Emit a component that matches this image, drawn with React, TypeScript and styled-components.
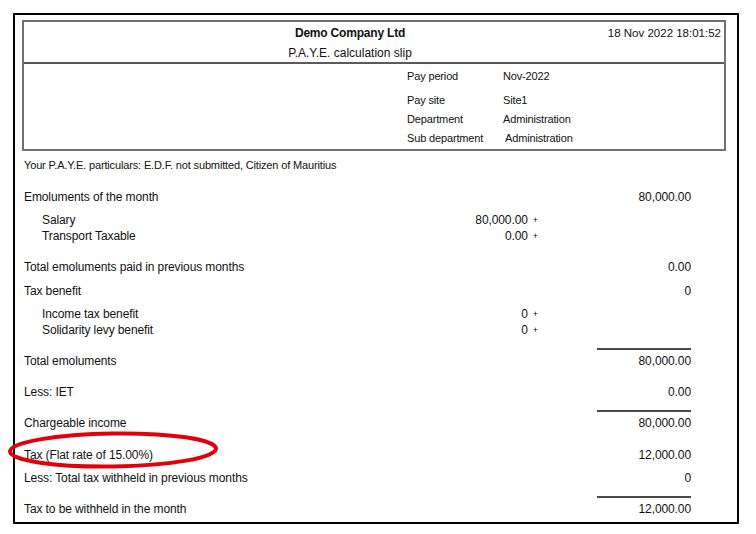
import React from "react";
import styled, { createGlobalStyle } from "styled-components";

const GlobalStyle = createGlobalStyle`
  html, body { margin: 0; padding: 0; background: #ffffff; }
  body { font-family: "Liberation Sans", Arial, sans-serif; color: #111; }
  * { box-sizing: border-box; }
`;

const Page = styled.div`
  padding: 13px 0 0 13px;
  width: 756px;
  height: 534px;
`;

const Frame = styled.div`
  width: 726px;
  height: 511px;
  border: 2px solid #000;
  padding-top: 5px;
`;

const HeaderBox = styled.div`
  margin: 0 11px 0 7px;
  border: 2px solid #707070;
`;

const TitleArea = styled.div`
  display: grid;
  grid-template-rows: 16px 16px;
  row-gap: 4px;
  padding: 3px 3px 1px 0;
  border-bottom: 2px solid #5a5a5a;
`;

const Title = styled.div`
  grid-row: 1;
  grid-column: 1;
  text-align: center;
  padding-right: 45px;
  font-weight: bold;
  font-size: 12px;
  line-height: 16px;
  letter-spacing: -0.2px;
`;

const DateText = styled.div`
  grid-row: 1;
  grid-column: 1;
  justify-self: end;
  font-size: 11.5px;
  line-height: 16px;
`;

const Subtitle = styled.div`
  grid-row: 2;
  grid-column: 1;
  text-align: center;
  padding-right: 45px;
  font-size: 12px;
  line-height: 16px;
`;

const InfoArea = styled.div`
  padding: 5px 0 4px 383px;
  display: flex;
  flex-direction: column;
`;

const InfoRow = styled.div<{ $mt: number; $shift?: number }>`
  display: grid;
  grid-template-columns: 96px auto;
  margin-top: ${(p) => p.$mt}px;
  font-size: 11px;
  line-height: 14px;
  letter-spacing: -0.15px;
  & > span:last-child {
    padding-left: ${(p) => p.$shift ?? 0}px;
  }
`;

const Particulars = styled.div`
  margin: 7px 0 0 9px;
  font-size: 11px;
  line-height: 14px;
  letter-spacing: -0.15px;
`;

const Body = styled.div`
  padding: 0 46px 0 9px;
  display: flex;
  flex-direction: column;
`;

const Row = styled.div<{ $mt: number }>`
  position: relative;
  display: grid;
  grid-template-columns: 1fr 100px 94px;
  column-gap: 59px;
  margin-top: ${(p) => p.$mt}px;
  font-size: 12px;
  line-height: 16px;
  letter-spacing: -0.1px;
`;

const Label = styled.span<{ $indent?: boolean }>`
  padding-left: ${(p) => (p.$indent ? 18 : 0)}px;
  white-space: nowrap;
`;

const Sub = styled.span`
  text-align: right;
  white-space: nowrap;
`;

const Plus = styled.span`
  font-size: 9px;
  margin-left: 5px;
  vertical-align: 1px;
`;

const Amount = styled.span`
  text-align: right;
  white-space: nowrap;
`;

const Rule = styled.div<{ $mt: number }>`
  margin-top: ${(p) => p.$mt}px;
  margin-left: auto;
  width: 94px;
  height: 2px;
  background: #4a4a4a;
`;

const Highlight = styled.svg`
  position: absolute;
  left: -17px;
  top: -16px;
  width: 212px;
  height: 38px;
  overflow: visible;
  pointer-events: none;
`;

type Line = {
  label: string;
  mt: number;
  indent?: boolean;
  sub?: string;
  amount?: string;
  ruleBefore?: number;
  circled?: boolean;
};

const lines: Line[] = [
  { label: "Emoluments of the month", mt: 17, amount: "80,000.00" },
  { label: "Salary", mt: 7, indent: true, sub: "80,000.00" },
  { label: "Transport Taxable", mt: 0, indent: true, sub: "0.00" },
  { label: "Total emoluments paid in previous months", mt: 15, amount: "0.00" },
  { label: "Tax benefit", mt: 8, amount: "0" },
  { label: "Income tax benefit", mt: 7, indent: true, sub: "0" },
  { label: "Solidarity levy benefit", mt: 0, indent: true, sub: "0" },
  { label: "Total emoluments", mt: 3, amount: "80,000.00", ruleBefore: 10 },
  { label: "Less: IET", mt: 15, amount: "0.00" },
  { label: "Chargeable income", mt: 3, amount: "80,000.00", ruleBefore: 10 },
  { label: "Tax (Flat rate of 15.00%)", mt: 16, amount: "12,000.00", circled: true },
  { label: "Less: Total tax withheld in previous months", mt: 7, amount: "0" },
  { label: "Tax to be withheld in the month", mt: 3, amount: "12,000.00", ruleBefore: 10 },
];

export default function App() {
  return (
    <>
      <GlobalStyle />
      <Page>
        <Frame>
          <HeaderBox>
            <TitleArea>
              <Title>Demo Company Ltd</Title>
              <DateText>18 Nov 2022 18:01:52</DateText>
              <Subtitle>P.A.Y.E. calculation slip</Subtitle>
            </TitleArea>
            <InfoArea>
              <InfoRow $mt={0}>
                <span>Pay period</span>
                <span>Nov-2022</span>
              </InfoRow>
              <InfoRow $mt={10}>
                <span>Pay site</span>
                <span>Site1</span>
              </InfoRow>
              <InfoRow $mt={5}>
                <span>Department</span>
                <span>Administration</span>
              </InfoRow>
              <InfoRow $mt={5} $shift={2}>
                <span>Sub department</span>
                <span>Administration</span>
              </InfoRow>
            </InfoArea>
          </HeaderBox>
          <Particulars>
            Your P.A.Y.E. particulars: E.D.F. not submitted, Citizen of Mauritius
          </Particulars>
          <Body>
            {lines.map((l) => (
              <React.Fragment key={l.label}>
                {l.ruleBefore !== undefined && <Rule $mt={l.ruleBefore} />}
                <Row $mt={l.mt}>
                  <Label $indent={l.indent}>{l.label}</Label>
                  <Sub>
                    {l.sub !== undefined && (
                      <>
                        {l.sub}
                        <Plus>+</Plus>
                      </>
                    )}
                  </Sub>
                  <Amount>{l.amount ?? ""}</Amount>
                  {l.circled && (
                    <Highlight viewBox="0 0 212 38">
                      <ellipse
                        cx="106"
                        cy="19"
                        rx="103"
                        ry="16.5"
                        fill="none"
                        stroke="#e3000b"
                        strokeWidth="4"
                        transform="rotate(-0.8 106 19)"
                      />
                    </Highlight>
                  )}
                </Row>
              </React.Fragment>
            ))}
          </Body>
        </Frame>
      </Page>
    </>
  );
}
